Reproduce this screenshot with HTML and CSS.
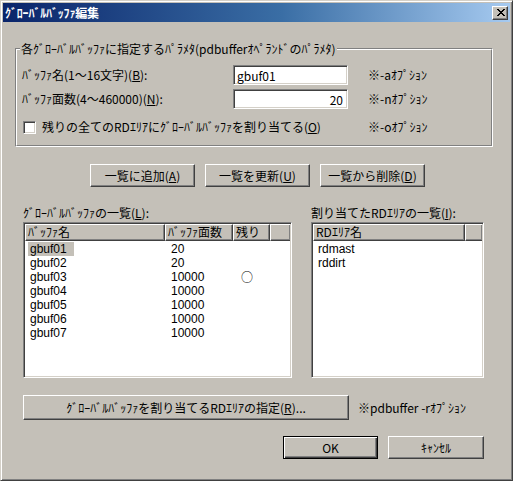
FILE: index.html
```html
<!DOCTYPE html>
<html lang="ja">
<head>
<meta charset="utf-8">
<title>ｸﾞﾛｰﾊﾞﾙﾊﾞｯﾌｧ編集</title>
<link rel="stylesheet" href="styles.css">
</head>
<body>
<div class="window">
  <div class="titlebar">
    <span class="title">ｸﾞﾛｰﾊﾞﾙﾊﾞｯﾌｧ編集</span>
    <div class="close">
      <svg width="8" height="7" viewBox="0 0 8 7" shape-rendering="crispEdges">
        <rect x="0" y="0" width="2" height="1"/><rect x="6" y="0" width="2" height="1"/>
        <rect x="1" y="1" width="2" height="1"/><rect x="5" y="1" width="2" height="1"/>
        <rect x="2" y="2" width="4" height="1"/>
        <rect x="3" y="3" width="2" height="1"/>
        <rect x="2" y="4" width="4" height="1"/>
        <rect x="1" y="5" width="2" height="1"/><rect x="5" y="5" width="2" height="1"/>
        <rect x="0" y="6" width="2" height="1"/><rect x="6" y="6" width="2" height="1"/>
      </svg>
    </div>
  </div>
  <div class="client">
    <div class="group">
      <span class="legend">各ｸﾞﾛｰﾊﾞﾙﾊﾞｯﾌｧに指定するﾊﾟﾗﾒﾀ(pdbufferｵﾍﾟﾗﾝﾄﾞのﾊﾟﾗﾒﾀ)</span>
      <div class="group-inner">
        <div class="row">
          <span class="field-label">ﾊﾞｯﾌｧ名(1～16文字)(<u>B</u>):</span>
          <div class="edit">gbuf01</div>
          <span class="note">※-aｵﾌﾟｼｮﾝ</span>
        </div>
        <div class="row row-2">
          <span class="field-label">ﾊﾞｯﾌｧ面数(4～460000)(<u>N</u>):</span>
          <div class="edit edit-num">20</div>
          <span class="note">※-nｵﾌﾟｼｮﾝ</span>
        </div>
        <div class="row row-3">
          <div class="check-wrap">
            <span class="checkbox"></span>
            <span class="check-label">残りの全てのRDｴﾘｱにｸﾞﾛｰﾊﾞﾙﾊﾞｯﾌｧを割り当てる(<u>O</u>)</span>
          </div>
          <span class="note">※-oｵﾌﾟｼｮﾝ</span>
        </div>
      </div>
    </div>

    <div class="btn-row">
      <div class="btn btn-list">一覧に追加(<u>A</u>)</div>
      <div class="btn btn-list">一覧を更新(<u>U</u>)</div>
      <div class="btn btn-list">一覧から削除(<u>D</u>)</div>
    </div>

    <div class="lists">
      <div class="list-col list-col-1">
        <div class="list-label">ｸﾞﾛｰﾊﾞﾙﾊﾞｯﾌｧの一覧(<u>L</u>):</div>
        <div class="listview lv-1">
          <div class="lv-header">
            <div class="hcell hc-name">ﾊﾞｯﾌｧ名</div>
            <div class="hcell hc-count">ﾊﾞｯﾌｧ面数</div>
            <div class="hcell hc-rest">残り</div>
            <div class="hcell hc-fill"></div>
          </div>
          <div class="lv-body">
            <div class="lv-row"><span class="c-name"><span class="sel">gbuf01</span></span><span class="c-count">20</span><span class="c-rest"></span></div>
            <div class="lv-row"><span class="c-name"><span class="txt">gbuf02</span></span><span class="c-count">20</span><span class="c-rest"></span></div>
            <div class="lv-row"><span class="c-name"><span class="txt">gbuf03</span></span><span class="c-count">10000</span><span class="c-rest">○</span></div>
            <div class="lv-row"><span class="c-name"><span class="txt">gbuf04</span></span><span class="c-count">10000</span><span class="c-rest"></span></div>
            <div class="lv-row"><span class="c-name"><span class="txt">gbuf05</span></span><span class="c-count">10000</span><span class="c-rest"></span></div>
            <div class="lv-row"><span class="c-name"><span class="txt">gbuf06</span></span><span class="c-count">10000</span><span class="c-rest"></span></div>
            <div class="lv-row"><span class="c-name"><span class="txt">gbuf07</span></span><span class="c-count">10000</span><span class="c-rest"></span></div>
          </div>
        </div>
      </div>
      <div class="list-col list-col-2">
        <div class="list-label">割り当てたRDｴﾘｱの一覧(<u>I</u>):</div>
        <div class="listview lv-2">
          <div class="lv-header">
            <div class="hcell hc-rd">RDｴﾘｱ名</div>
            <div class="hcell hc-fill"></div>
          </div>
          <div class="lv-body">
            <div class="lv-row"><span class="c-name"><span class="txt">rdmast</span></span></div>
            <div class="lv-row"><span class="c-name"><span class="txt">rddirt</span></span></div>
          </div>
        </div>
      </div>
    </div>

    <div class="assign-row">
      <div class="btn btn-assign">ｸﾞﾛｰﾊﾞﾙﾊﾞｯﾌｧを割り当てるRDｴﾘｱの指定(<u>R</u>)...</div>
      <span class="note note-r">※pdbuffer -rｵﾌﾟｼｮﾝ</span>
    </div>

    <div class="ok-row">
      <div class="btn btn-default btn-ok">OK</div>
      <div class="btn btn-cancel">ｷｬﾝｾﾙ</div>
    </div>
  </div>
</div>
</body>
</html>
```

FILE: styles.css
```css
* {
  box-sizing: border-box;
}

html,
body {
  margin: 0;
  padding: 0;
}

body {
  width: 513px;
  height: 481px;
  overflow: hidden;
  background: #c4c0b8;
  color: #000;
  font-family: "Noto Sans CJK JP", "MS UI Gothic", sans-serif;
  font-size: 12px;
  line-height: 14px;
}

u {
  text-decoration: underline;
  text-underline-offset: 1px;
}

.window {
  width: 513px;
  height: 481px;
  display: flex;
  flex-direction: column;
  padding: 2px;
  background: #c4c0b8;
  border: 1px solid;
  border-color: #d4d0c8 #404040 #404040 #d4d0c8;
  box-shadow: inset 1px 1px #fff, inset -1px -1px #808080;
}

/* Title bar */
.titlebar {
  height: 19px;
  flex: none;
  display: flex;
  align-items: center;
  justify-content: space-between;
  padding: 0 2px 0 2px;
  background: linear-gradient(to right, #0a246a 0%, #3a6ea5 55%, #a6caf0 100%);
}

.title {
  color: #fff;
  font-weight: bold;
  font-size: 12px;
  line-height: 14px;
  letter-spacing: -0.2px;
}

.close {
  width: 16px;
  height: 14px;
  display: flex;
  align-items: center;
  justify-content: center;
  background: #c4c0b8;
  border: 1px solid;
  border-color: #fff #404040 #404040 #fff;
  box-shadow: inset -1px -1px #808080;
  padding-left: 1px;
}

.close svg {
  display: block;
  fill: #000;
}

/* Client area */
.client {
  flex: 1;
  display: flex;
  flex-direction: column;
}

/* Group box */
.group {
  position: relative;
  margin: 26px 0 0 12px;
  width: 478px;
  border: 1px solid;
  border-color: #808080 #fff #fff #808080;
}

.group-inner {
  border: 1px solid;
  border-color: #fff #808080 #808080 #fff;
  padding: 15px 0 8px 5px;
}

.legend {
  position: absolute;
  top: -7px;
  left: 4px;
  padding: 0 1px;
  background: #c4c0b8;
  line-height: 13px;
  white-space: nowrap;
}

.row {
  display: flex;
  align-items: center;
  height: 20px;
}

.row-2 {
  margin-top: 4px;
}

.row-3 {
  margin-top: 8px;
}

.field-label {
  width: 211px;
  flex: none;
  white-space: nowrap;
}

.edit {
  width: 115px;
  height: 20px;
  flex: none;
  background: #fff;
  border: 1px solid;
  border-color: #808080 #fff #fff #808080;
  box-shadow: inset 1px 1px #404040, inset -1px -1px #d4d0c8;
  padding: 2px 3px 0 3px;
  line-height: 15px;
  white-space: nowrap;
}

.edit-num {
  text-align: right;
  padding-right: 4px;
}

.note {
  margin-left: 20px;
  white-space: nowrap;
}

.check-wrap {
  width: 326px;
  flex: none;
  display: flex;
  align-items: center;
}

.checkbox {
  width: 13px;
  height: 13px;
  flex: none;
  margin-left: 1px;
  background: #fff;
  border: 1px solid;
  border-color: #808080 #fff #fff #808080;
  box-shadow: inset 1px 1px #404040, inset -1px -1px #d4d0c8;
}

.check-label {
  margin-left: 6px;
  white-space: nowrap;
}

/* Buttons */
.btn {
  display: flex;
  align-items: center;
  justify-content: center;
  background: #c4c0b8;
  border: 1px solid;
  border-color: #fff #404040 #404040 #fff;
  box-shadow: inset -1px -1px #808080;
  white-space: nowrap;
  line-height: 14px;
}

.btn-default {
  border-color: #000;
  box-shadow: inset 1px 1px #fff, inset -1px -1px #404040, inset -2px -2px #808080;
}

.btn-row {
  display: flex;
  gap: 10px;
  margin: 17px 0 0 87px;
}

.btn-list {
  width: 105px;
  height: 23px;
}

/* Lists */
.lists {
  display: flex;
  gap: 19px;
  margin: 19px 0 0 20px;
}

.list-label {
  height: 14px;
  white-space: nowrap;
}

.listview {
  margin-top: 2px;
  height: 156px;
  background: #fff;
  border: 1px solid;
  border-color: #808080 #fff #fff #808080;
  box-shadow: inset 1px 1px #404040, inset -1px -1px #d4d0c8;
  padding: 1px;
  overflow: hidden;
}

.lv-1 {
  width: 269px;
}

.lv-2 {
  width: 173px;
}

.lv-header {
  display: flex;
  height: 17px;
}

.hcell {
  height: 17px;
  flex: none;
  background: #c4c0b8;
  border: 1px solid;
  border-color: #fff #404040 #404040 #fff;
  box-shadow: inset -1px -1px #808080;
  padding: 0 0 0 2px;
  line-height: 14px;
  white-space: nowrap;
}

.hc-name {
  width: 140px;
}

.hc-count {
  width: 68px;
}

.hc-rest {
  width: 37px;
}

.hc-rd {
  width: 152px;
}

.hc-fill {
  flex: 1;
  border-right: none;
}

.lv-body {
  padding-top: 1px;
  font-family: "Liberation Sans", Arial, sans-serif;
}

.lv-row {
  display: flex;
  height: 14px;
  line-height: 14px;
}

.c-name {
  width: 140px;
  flex: none;
  padding-left: 3px;
}

.c-name .sel,
.c-name .txt {
  display: inline-block;
  padding: 0 2px;
}

.c-name .sel {
  background: #c4c0b8;
  width: 46px;
}

.c-count {
  width: 68px;
  flex: none;
  padding-left: 6px;
}

.c-rest {
  width: 37px;
  flex: none;
  padding-left: 8px;
  font-family: "Noto Sans CJK JP", sans-serif;
  font-size: 12px;
  line-height: 14px;
}

/* Bottom */
.assign-row {
  display: flex;
  align-items: center;
  margin: 17px 0 0 20px;
}

.btn-assign {
  width: 326px;
  height: 25px;
}

.note-r {
  margin-left: 9px;
}

.ok-row {
  display: flex;
  gap: 10px;
  margin: 16px 0 0 280px;
}

.btn-ok {
  width: 95px;
  height: 23px;
}

.btn-cancel {
  width: 96px;
  height: 23px;
}
```
